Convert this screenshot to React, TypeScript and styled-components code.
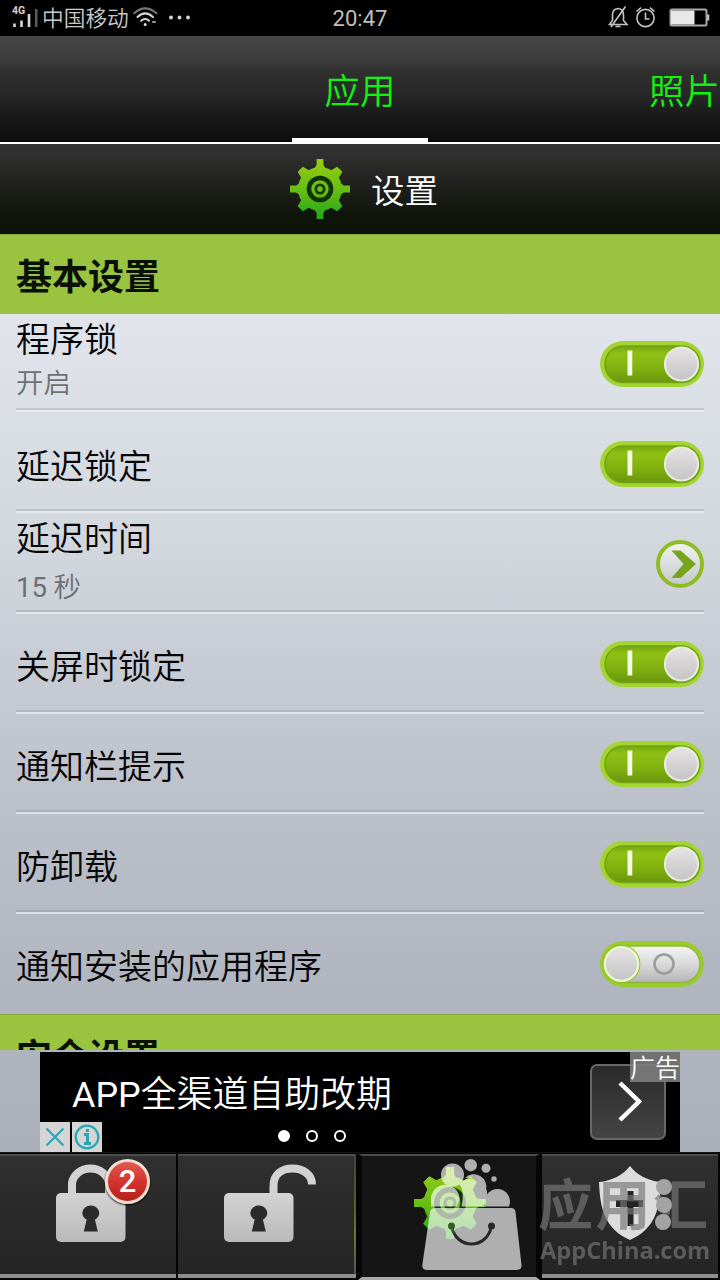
import React from "react";
import styled, { createGlobalStyle } from "styled-components";

const Global = createGlobalStyle`
  * { box-sizing: border-box; }
  html, body { margin: 0; padding: 0; background: #000; }
  body { overflow: hidden; font-family: Roboto, "Noto Sans CJK SC", sans-serif; }
  svg { display: block; flex: none; overflow: visible; }
`;

const Screen = styled.div`
  position: relative;
  width: 720px;
  height: 1280px;
  display: flex;
  flex-direction: column;
  overflow: hidden;
  background: #000;
`;

const StatusBar = styled.header`
  height: 36px;
  flex: none;
  display: grid;
  grid-template-columns: 1fr auto 1fr;
  grid-template-rows: 32px;
  align-items: center;
  padding: 0 10px 4px 12px;
  background: #000;
  color: #c9c9c9;
`;

const StatusGroup = styled.div<{ $end?: boolean }>`
  display: flex;
  align-items: center;
  padding-top: 2px;
  justify-content: ${(p) => (p.$end ? "flex-end" : "flex-start")};
`;

const Carrier = styled.span`
  margin: 0 4px 0 4px;
  font: 350 21.7px/32px "Noto Sans CJK SC", sans-serif;
`;

const Clock = styled.span`
  font: 400 22px/32px Roboto, sans-serif;
  padding: 6px 2px 0 0;
  color: #bdbdbd;
`;

const TabBar = styled.nav`
  height: 108px;
  flex: none;
  display: grid;
  grid-template-columns: 292px 136px 292px;
  background: linear-gradient(#464646 0, #3c3c3c 26px, #303030 34px, #272727 60px, #191919 80px, #101010 104px, #050505 106px);
  border-bottom: 2px solid #fff;
`;

const Tab = styled.div<{ $active?: boolean; $edge?: boolean }>`
  height: 108px;
  display: flex;
  justify-content: ${(p) => (p.$edge ? "flex-end" : "center")};
  border-bottom: ${(p) => (p.$active ? "6px solid #fff" : "0")};
  font: 350 35.5px/105px "Noto Sans CJK SC", sans-serif;
  color: #14f014;
  white-space: nowrap;
`;

const TitleBar = styled.div`
  height: 90px;
  flex: none;
  display: flex;
  align-items: center;
  justify-content: center;
  gap: 21px;
  padding-left: 8px;
  background: linear-gradient(#343434, #20211f 45%, #10150a 80%, #0c1204);
  color: #fff;
  font: 350 33.5px/90px "Noto Sans CJK SC", sans-serif;
`;

const Content = styled.main`
  height: 918px;
  flex: none;
  display: flex;
  flex-direction: column;
  background: linear-gradient(#e1e4eb 80px, #d3d7de 300px, #bdc1ca 560px, #b1b5bf 760px, #abb0ba);
`;

const Scroller = styled.div`
  height: 816px;
  flex: none;
  overflow: hidden;
`;

const SectionTitle = styled.h2`
  margin: 0;
  height: 80px;
  padding-left: 16px;
  background: #9ac440;
  border-top: 1px solid #86ad3c;
  color: #0b1005;
  font: 700 36px/79px "Noto Sans CJK SC", sans-serif;
`;

const List = styled.div`
  display: flex;
  flex-direction: column;
  padding: 0 16px;
`;

const Row = styled.div<{ $h: number; $top: number; $last?: boolean }>`
  height: ${(p) => p.$h}px;
  display: flex;
  align-items: center;
  justify-content: space-between;
  padding-top: ${(p) => p.$top}px;
  padding-bottom: ${(p) => (p.$last ? 1 : 0)}px;
  border-bottom: ${(p) => (p.$last ? "0" : "2px solid rgba(236, 240, 244, 0.7)")};
  box-shadow: ${(p) => (p.$last ? "none" : "inset 0 -2px rgba(120, 125, 130, 0.25)")};
`;

const Labels = styled.div<{ $lift: number }>`
  display: flex;
  flex-direction: column;
  padding-top: ${(p) => Math.max(0, -p.$lift)}px;
  padding-bottom: ${(p) => Math.max(0, p.$lift)}px;
`;

const Label = styled.span`
  font: 350 34px/44px "Noto Sans CJK SC", sans-serif;
  color: #050505;
`;

const Detail = styled.span<{ $gap: number }>`
  margin-top: ${(p) => p.$gap}px;
  font: 350 27.5px/44px Roboto, "Noto Sans CJK SC", sans-serif;
  color: #6d7073;
`;

const Latin = styled.span`
  font-weight: 400;
`;

const AdSlot = styled.div`
  height: 102px;
  flex: none;
  display: flex;
  justify-content: center;
  padding-top: 2px;
`;

const Ad = styled.div`
  position: relative;
  width: 640px;
  height: 100px;
  display: flex;
  justify-content: space-between;
  padding: 12px 14px 0 32px;
  background: #000;
  color: #fff;
`;

const AdText = styled.span`
  font: 350 35.9px/63px Roboto, "Noto Sans CJK SC", sans-serif;
  white-space: nowrap;
`;

const AdButton = styled.div`
  width: 76px;
  height: 76px;
  display: flex;
  align-items: center;
  justify-content: center;
  padding-left: 4px;
  border: 2px solid #686868;
  border-radius: 7px;
  background: linear-gradient(#2a2a2a, #444);
`;

const AdTag = styled.span`
  position: absolute;
  top: 0;
  right: 0;
  width: 50px;
  height: 30px;
  background: rgba(125, 125, 125, 0.9);
  font: 350 25px/29px "Noto Sans CJK SC", sans-serif;
`;

const AdChoices = styled.div`
  position: absolute;
  left: 0;
  bottom: 0;
  display: flex;
  gap: 2px;
`;

const ChoiceBox = styled.div`
  width: 30px;
  height: 30px;
  background: #d5d5d5;
`;

const Pager = styled.div`
  position: absolute;
  left: 238px;
  bottom: 10px;
  display: flex;
  gap: 16px;
`;

const Dot = styled.i<{ $on?: boolean }>`
  width: 12px;
  height: 12px;
  border-radius: 50%;
  border: 2.5px solid #fff;
  background: ${(p) => (p.$on ? "#fff" : "#000")};
`;

const BottomNav = styled.nav`
  height: 128px;
  flex: none;
  display: grid;
  grid-template-columns: 176px 178px 182px 176px;
  column-gap: 2px;
  padding-top: 1px;
  border-top: 1px solid #111;
  background: #050505;
`;

const NavItem = styled.div<{ $active?: boolean; $glow?: boolean }>`
  position: relative;
  height: ${(p) => (p.$active ? 126 : 124)}px;
  border-top: 2px solid #4b4b4b;
  border-bottom: ${(p) => (p.$active ? 3 : 4)}px solid ${(p) => (p.$active ? "#a9a9a9" : "#8e8e8e")};
  border-left: ${(p) => (p.$active ? "4px solid #060606" : "0")};
  border-right: ${(p) => (p.$active ? "4px solid #060606" : "0")};
  background: ${(p) => (p.$active ? "#151515" : "linear-gradient(#303030, #292929 50%, #252525)")};
  &::after {
    content: "";
    display: ${(p) => (p.$glow ? "block" : "none")};
    position: absolute;
    top: 0;
    bottom: 0;
    right: 0;
    width: 2px;
    background: linear-gradient(#444, #55661d 45%, #687b25 65%, #555);
  }
`;

const NavIcon = styled.div<{ $x: number; $y: number }>`
  margin-left: ${(p) => p.$x}px;
  padding-top: ${(p) => p.$y}px;
`;

const Badge = styled.span`
  position: absolute;
  left: 105px;
  top: 3px;
  width: 45px;
  height: 45px;
  border-radius: 50%;
  border: 3px solid #f3dcd2;
  background: linear-gradient(#df5a50, #d3302b 55%, #b5211c);
  box-shadow: 0 1px 2px #000;
  color: #fff;
  text-align: center;
  font: 500 31px/40px Roboto, sans-serif;
`;

const Watermark = styled.div`
  position: absolute;
  left: 418px;
  top: 1152px;
  width: 302px;
  height: 128px;
`;

const BagLayer = styled.div`
  position: absolute;
  left: 0;
  top: 0;
  opacity: 0.66;
`;

const MarkText = styled.div`
  position: absolute;
  left: 120px;
  top: 17px;
  opacity: 0.67;
  color: #777;
  white-space: nowrap;
`;

const MarkName = styled.div`
  font: 700 55px/64px "Noto Sans CJK SC", sans-serif;
  letter-spacing: 2.5px;
`;

const MarkUrl = styled.div`
  padding: 5px 0 0 2px;
  font: 700 23.6px/24px "Open Sans", sans-serif;
`;

const DotsLayer = styled.div`
  position: absolute;
  left: 234px;
  top: 24px;
`;

function Gear({ id, size }: { id: string; size: number }) {
  const angles = [0, 45, 90, 135, 180, 225, 270, 315];
  return (
    <svg width={size} height={size} viewBox="-30 -30 60 60">
      <defs>
        <linearGradient id={id} gradientUnits="userSpaceOnUse" x1="0" y1="-30" x2="0" y2="30">
          <stop offset="0" stopColor="#98cc10" />
          <stop offset="0.55" stopColor="#62bd14" />
          <stop offset="1" stopColor="#22a51c" />
        </linearGradient>
        <mask id={id + "m"} maskUnits="userSpaceOnUse" x="-30" y="-30" width="60" height="60">
          <circle r="22" fill="#fff" />
          {angles.map((a) => (
            <path
              key={a}
              transform={`rotate(${a})`}
              d={a % 90 ? "M-6 -19L-3.6 -28H3.6L6 -19Z" : "M-6.5 -19L-3.4 -24V-30H3.4V-24L6.5 -19Z"}
              fill="#fff"
            />
          ))}
        </mask>
      </defs>
      <rect x="-30" y="-30" width="60" height="60" fill={`url(#${id})`} mask={`url(#${id}m)`} />
      <circle r="11" fill="none" stroke="#12320a" strokeWidth="4.6" />
      <circle r="4.2" fill="none" stroke="#163a0a" strokeWidth="2.6" />
    </svg>
  );
}

function Toggle({ on }: { on?: boolean }) {
  return (
    <svg width="104" height="48" viewBox="0 0 104 48">
      <defs>
        <linearGradient id="tgOn" x1="0" y1="0" x2="0" y2="1">
          <stop offset="0" stopColor="#74a50e" />
          <stop offset="0.2" stopColor="#8ec013" />
          <stop offset="0.6" stopColor="#80b210" />
          <stop offset="1" stopColor="#69960d" />
        </linearGradient>
        <linearGradient id="tgOff" x1="0" y1="0" x2="0" y2="1">
          <stop offset="0" stopColor="#f5f5f5" />
          <stop offset="0.5" stopColor="#d9d9da" />
          <stop offset="1" stopColor="#b4b5b7" />
        </linearGradient>
        <linearGradient id="tgKnob" x1="0" y1="0" x2="0" y2="1">
          <stop offset="0" stopColor="#e6e3e3" />
          <stop offset="1" stopColor="#c3c3c5" />
        </linearGradient>
      </defs>
      <rect x="0" y="1" width="104" height="46" rx="23" fill={on ? "#a2d532" : "#9acb2c"} />
      <rect x="5" y="6" width="95" height="36.5" rx="18.2" fill={on ? "url(#tgOn)" : "url(#tgOff)"} stroke={on ? "#72a312" : "#8fb83a"} strokeWidth="1.5" />
      {on ? (
        <>
          <rect x="27.5" y="10.5" width="4.8" height="25" fill="#f6fbe4" />
          <circle cx="81.5" cy="24" r="16.6" fill="url(#tgKnob)" stroke="#e8eddd" strokeWidth="2" />
        </>
      ) : (
        <>
          <circle cx="64" cy="24" r="9.5" fill="none" stroke="#9c9c9c" strokeWidth="2.6" />
          <circle cx="21.5" cy="24" r="19" fill="#8fbf25" />
          <circle cx="21.5" cy="24" r="16.8" fill="url(#tgKnob)" stroke="#eef7cf" strokeWidth="2.2" />
        </>
      )}
    </svg>
  );
}

function ArrowButton() {
  return (
    <svg width="48" height="48" viewBox="0 0 48 48">
      <defs>
        <linearGradient id="arrBg" x1="0" y1="0" x2="0" y2="1">
          <stop offset="0" stopColor="#f2f4f2" />
          <stop offset="1" stopColor="#c4c7ca" />
        </linearGradient>
      </defs>
      <circle cx="24" cy="24" r="22" fill="url(#arrBg)" stroke="#8fbc25" strokeWidth="4" />
      <path d="M15.5 10.5H24.5L40 24L24.5 38H15.5L27.5 24Z" fill="#76a41c" />
    </svg>
  );
}

function Keyhole({ x, y }: { x: number; y: number }) {
  return (
    <g transform={`translate(${x} ${y})`} fill="#2a2a2a">
      <ellipse rx="8.5" ry="7.5" />
      <path d="M-3.5 4H3.5L7 18.5H-7Z" />
    </g>
  );
}

function Lock({ open }: { open?: boolean }) {
  return (
    <svg width="94" height="80" viewBox="0 0 94 80">
      <defs>
        <linearGradient id="lockBody" x1="0" y1="0" x2="0" y2="1">
          <stop offset="0" stopColor="#d3d3d3" />
          <stop offset="1" stopColor="#b9b9b9" />
        </linearGradient>
      </defs>
      <path
        d={open ? "M49.5 35V24C49.5 12 58 6.5 68.5 6.5C79 6.5 88 12.5 88 22.5" : "M16 35V21A18.7 17 0 0 1 53 21V35"}
        fill="none"
        stroke="#d2d2d2"
        strokeWidth="8"
      />
      <rect x="0" y="31" width="69.5" height="49" rx="5" fill="url(#lockBody)" />
      <Keyhole x={34.8} y={51} />
    </svg>
  );
}

function Shield() {
  return (
    <svg width="64" height="76" viewBox="0 0 64 76">
      <path d="M32 0C25 9 14 15 1 16C2 43 7 63 32 74C57 63 62 43 63 16C50 15 39 9 32 0Z" fill="#dcdcdc" />
      <path d="M29.5 25H35.5V34H45V41H35.5V60H29.5V41H18V34H29.5Z" fill="#242424" />
    </svg>
  );
}

function Signal() {
  return (
    <svg width="26" height="24" viewBox="0 0 26 24">
      <text x="0" y="9" fontFamily="Roboto" fontWeight="700" fontSize="10.5" fill="#d0d0d0">4G</text>
      <path d="M2.5 18.5V22M9.5 15.5V22M17 9V22" stroke="#d8d8d8" strokeWidth="2.6" />
      <path d="M24.2 4V22" stroke="#5a5a5a" strokeWidth="2.6" />
    </svg>
  );
}

function Wifi() {
  return (
    <svg width="25" height="20" viewBox="0 0 25 20" fill="none" strokeWidth="2" strokeLinecap="round">
      <path d="M1.2 6.2Q12 -3.5 23.5 6.2" stroke="#777" />
      <path d="M4.5 10Q12 2.8 20 10" stroke="#dcdcdc" />
      <path d="M8.2 13.8Q12 10.2 16 13.8" stroke="#dcdcdc" />
      <circle cx="12.2" cy="17.5" r="1.5" fill="#dcdcdc" />
      <path d="M20 15H22" stroke="#999" />
    </svg>
  );
}

function StatusIcons() {
  return (
    <svg width="104" height="26" viewBox="0 0 104 26" fill="none" stroke="#c4c4c4" strokeWidth="1.6">
      <path d="M3.5 20.5L6.5 16.5V11Q6.5 5 12 4.5Q17.5 5 17.5 11V16.5L21 20.5ZM9.5 22.5H14.5M5 23L19.5 2.5" />
      <circle cx="39.5" cy="14" r="8.6" />
      <path d="M39.5 8.5V15H43.5M30.5 7.5L35 3.7M44 3.7L48.5 7.5" />
      <rect x="64.5" y="5.5" width="36" height="16" rx="1.5" stroke="#a8a8a8" strokeWidth="2" />
      <rect x="65" y="6.5" width="23.5" height="14" fill="#e8e8e8" stroke="none" />
      <path d="M102.2 10.5V16.5" strokeWidth="2.2" />
    </svg>
  );
}

function Bag() {
  return (
    <svg width="110" height="128" viewBox="418 1152 110 128">
      <g fill="#fff">
        <circle cx="452.5" cy="1175" r="11.5" />
        <circle cx="470.7" cy="1165.2" r="6.2" />
        <circle cx="486" cy="1168.3" r="4.5" />
        <circle cx="494" cy="1179" r="2.7" />
        <path d="M465 1178A12.5 12.5 0 0 1 486 1190A20 20 0 0 0 465 1178Z" />
        <path d="M431 1206.5V1197A14.5 15 0 0 1 459.5 1197V1200L457 1206.5Z" />
        <path d="M461.5 1206.5Q465 1190 459 1184A15 15 0 0 1 483 1206.5Z" />
        <path d="M486 1206.5A12.5 12.5 0 1 1 509 1206.5Z" />
        <path d="M435 1208H511Q515 1208 515.5 1212L521.5 1265Q522 1270 517 1270H427Q422 1270 422.3 1265L430 1212Q430.5 1208 435 1208Z" />
      </g>
      <path d="M451.5 1226C456 1250 487 1250 491.5 1226" fill="none" stroke="#333" strokeWidth="3" />
      <circle cx="451.5" cy="1226" r="3.5" fill="#333" />
      <circle cx="491.5" cy="1226" r="3.5" fill="#333" />
    </svg>
  );
}

type RowData = {
  label: string;
  detail?: React.ReactNode;
  kind: "on" | "off" | "go";
  height: number;
  top: number;
  lift: number;
  gap?: number;
};

const rows: RowData[] = [
  { label: "程序锁", detail: "开启", kind: "on", height: 98, top: 4, lift: 6, gap: 2 },
  { label: "延迟锁定", kind: "on", height: 101, top: 4, lift: -2 },
  { label: "延迟时间", detail: <><Latin>15</Latin> 秒</>, kind: "go", height: 101, top: 2, lift: 2, gap: 7 },
  { label: "关屏时锁定", kind: "on", height: 100, top: 2, lift: -1 },
  { label: "通知栏提示", kind: "on", height: 100, top: 2, lift: -1 },
  { label: "防卸载", kind: "on", height: 100, top: 2, lift: -1 },
  { label: "通知安装的应用程序", kind: "off", height: 100, top: 0, lift: -2 },
];

export default function App() {
  return (
    <Screen lang="zh-CN">
      <Global />
      <StatusBar>
        <StatusGroup>
          <Signal />
          <Carrier>中国移动</Carrier>
          <Wifi />
          <svg width="36" height="6" viewBox="0 0 36 6" fill="#d8d8d8">
            <circle cx="13" cy="3.5" r="1.9" />
            <circle cx="21.5" cy="3.5" r="1.9" />
            <circle cx="30" cy="3.5" r="1.9" />
          </svg>
        </StatusGroup>
        <Clock>20:47</Clock>
        <StatusGroup $end>
          <StatusIcons />
        </StatusGroup>
      </StatusBar>
      <TabBar>
        <Tab />
        <Tab $active>应用</Tab>
        <Tab $edge>照片</Tab>
      </TabBar>
      <TitleBar>
        <Gear id="gearTop" size={60} />
        <span>设置</span>
      </TitleBar>
      <Content>
        <Scroller>
          <SectionTitle>基本设置</SectionTitle>
          <List>
            {rows.map((r, i) => (
              <Row key={r.label} $h={r.height} $top={r.top} $last={i === rows.length - 1}>
                <Labels $lift={r.lift}>
                  <Label>{r.label}</Label>
                  {r.detail && <Detail $gap={r.gap ?? 0}>{r.detail}</Detail>}
                </Labels>
                {r.kind === "go" ? <ArrowButton /> : <Toggle on={r.kind === "on"} />}
              </Row>
            ))}
          </List>
          <SectionTitle>安全设置</SectionTitle>
        </Scroller>
        <AdSlot>
          <Ad>
            <AdText><Latin>APP</Latin>全渠道自助改期</AdText>
            <AdButton>
              <svg width="26" height="42" viewBox="0 0 26 42">
                <path d="M3 2L22 20.5L3 39" fill="none" stroke="#fff" strokeWidth="4.5" />
              </svg>
            </AdButton>
            <AdTag>广告</AdTag>
            <AdChoices>
              <ChoiceBox>
                <svg width="30" height="30" viewBox="0 0 30 30">
                  <path d="M6.5 6.5L23.5 23.5M23.5 6.5L6.5 23.5" stroke="#2aa5b5" strokeWidth="2.2" />
                </svg>
              </ChoiceBox>
              <ChoiceBox>
                <svg width="30" height="30" viewBox="0 0 30 30" fill="none" stroke="#2aa5b5" strokeWidth="2.2">
                  <circle cx="15" cy="15" r="11.3" />
                  <path d="M12 12.5H15.5V21M12 21.5H19M15.5 7V10" strokeWidth="3" />
                </svg>
              </ChoiceBox>
            </AdChoices>
            <Pager>
              <Dot $on />
              <Dot />
              <Dot />
            </Pager>
          </Ad>
        </AdSlot>
      </Content>
      <BottomNav>
        <NavItem>
          <NavIcon $x={56} $y={6}><Lock /></NavIcon>
          <Badge>2</Badge>
        </NavItem>
        <NavItem $glow>
          <NavIcon $x={46} $y={6}><Lock open /></NavIcon>
        </NavItem>
        <NavItem $active>
          <NavIcon $x={52} $y={11}><Gear id="gearNav" size={72} /></NavIcon>
        </NavItem>
        <NavItem>
          <NavIcon $x={56} $y={10}><Shield /></NavIcon>
        </NavItem>
      </BottomNav>
      <Watermark>
        <BagLayer><Bag /></BagLayer>
        <MarkText>
          <MarkName>应用汇</MarkName>
          <MarkUrl>AppChina.com</MarkUrl>
        </MarkText>
        <DotsLayer>
          <svg width="24" height="60" viewBox="0 0 24 60" fill="#a3a3a3">
            <circle cx="12" cy="11" r="8" />
            <circle cx="12" cy="29" r="8" />
            <circle cx="11" cy="46" r="8" />
          </svg>
        </DotsLayer>
      </Watermark>
    </Screen>
  );
}
